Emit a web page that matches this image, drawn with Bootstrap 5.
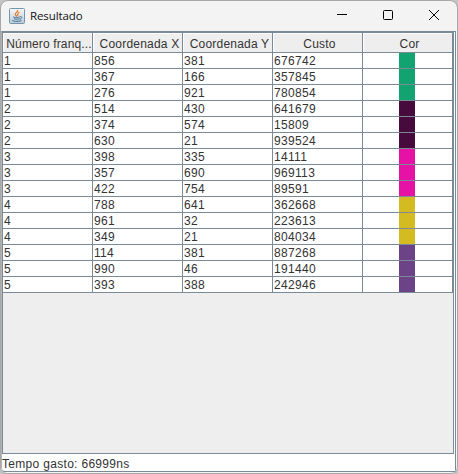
<!DOCTYPE html>
<html lang="pt-BR">
<head>
<meta charset="utf-8">
<meta name="viewport" content="width=device-width, initial-scale=1">
<title>Resultado</title>
<link rel="stylesheet" href="https://cdn.jsdelivr.net/npm/bootstrap@5.3.0/dist/css/bootstrap.min.css">
<style>
:root{--line:#7a8a99;}
html,body{height:100%;overflow:hidden}
body{background:#c4c4c4;font-family:"Liberation Sans",Arial,sans-serif;font-size:12px;line-height:15px;color:#333}
.win{width:458px;height:474px;border:1px solid #a8a8a8;border-radius:8px 8px 7px 7px;background:#f3f3f3}
.titlebar{height:30px;flex:none;padding-left:8px}
.caption{font-family:"Open Sans","Noto Sans",sans-serif;font-size:11.5px;color:#111;margin-left:5px;padding-bottom:2px;letter-spacing:-.1px}
.ctl{width:46px;height:28px}
.client{background:#fff;border-top:1px solid var(--line);border-right:1px solid var(--line);border-bottom:1px solid var(--line);border-left:1px solid #b4b4b4;border-bottom-left-radius:4px;margin:0 1px 1px 0}
.pane{height:422px;width:452px;border:1px solid var(--line);background:#eee}
.grid-table{table-layout:fixed;width:450px;border-collapse:separate;border-spacing:0}
.grid-table th,.grid-table td{width:90px;padding:0;border-right:1px solid var(--line);border-bottom:1px solid var(--line);overflow:hidden;white-space:nowrap;font-weight:400}
.grid-table th{height:20px;background:#eee;text-align:center;box-shadow:inset 1px 1px #fff;padding:3px 0 0 4px;line-height:14px;letter-spacing:.2px}
.grid-table th:first-child{padding-left:3px;letter-spacing:.13px}
.grid-table td{height:16px;background:#fff;padding-left:1px;line-height:15px;letter-spacing:.33px}
.digits{height:15px;line-height:17px}
.swatch{width:16px;height:15px;margin-left:35px}
.c1{background:#12a370}.c2{background:#460b3c}.c3{background:#e612a6}.c4{background:#d5bb22}.c5{background:#6d4388}
.status{height:17px;line-height:20px;letter-spacing:.31px}
</style>
</head>
<body>
<div class="win d-flex flex-column overflow-hidden">
  <div class="titlebar d-flex align-items-center">
    <svg width="16" height="16" viewBox="0 0 16 16"><defs><linearGradient id="g" x2="0" y2="1"><stop stop-color="#f6f8fa"/><stop offset="1" stop-color="#b7cad8"/></linearGradient></defs><rect x=".5" y=".5" width="15" height="15" rx="1" fill="url(#g)" stroke="#7595ab"/><path d="M8.500 2C9.500 4 5 5 6.500 7L8 8.500M10.500 4C7.500 5 9.500 6 8.500 8" fill="none" stroke="#ec7b20" stroke-width="1.200"/><path d="M4.500 8.500C3 10 12 9.500 10.500 8.700M5 10.500c1 1 4 .8 5.500.2M11 8.500c3 0 1.500 2.500-.5 2.700M3.500 12c-1 2 9 1.500 9 .3" fill="none" stroke="#426f94"/></svg>
    <span class="caption">Resultado</span>
    <div class="d-flex ms-auto pb-1">
      <div class="ctl d-flex align-items-center justify-content-center"><svg width="12" height="12"><path d="M1 6.500h10" stroke="#000"/></svg></div>
      <div class="ctl d-flex align-items-center justify-content-center"><svg width="12" height="12"><rect x="1.500" y="2.500" width="9" height="9" rx="1" fill="none" stroke="#000"/></svg></div>
      <div class="ctl d-flex align-items-center justify-content-center"><svg width="12" height="12"><path d="M1 2l10 10M11 2L1 12" stroke="#000"/></svg></div>
    </div>
  </div>
  <div class="client flex-grow-1">
    <div class="pane">
      <table class="grid-table">
        <thead><tr><th>Número franq...</th><th>Coordenada X</th><th>Coordenada Y</th><th>Custo</th><th>Cor</th></tr></thead>
        <tbody id="rows"></tbody>
      </table>
    </div>
    <div class="status">Tempo gasto: 66999ns</div>
  </div>
</div>
<script src="https://cdn.jsdelivr.net/npm/bootstrap@5.3.0/dist/js/bootstrap.bundle.min.js"></script>
<script>
const data=[[1,856,381,676742],[1,367,166,357845],[1,276,921,780854],[2,514,430,641679],[2,374,574,15809],[2,630,21,939524],[3,398,335,14111],[3,357,690,969113],[3,422,754,89591],[4,788,641,362668],[4,961,32,223613],[4,349,21,804034],[5,114,381,887268],[5,990,46,191440],[5,393,388,242946]];
document.getElementById('rows').innerHTML=data.map(r=>'<tr>'+r.map(v=>`<td><div class="digits">${v}</div></td>`).join('')+`<td><div class="swatch c${r[0]}"></div></td></tr>`).join('');
</script>
</body>
</html>
